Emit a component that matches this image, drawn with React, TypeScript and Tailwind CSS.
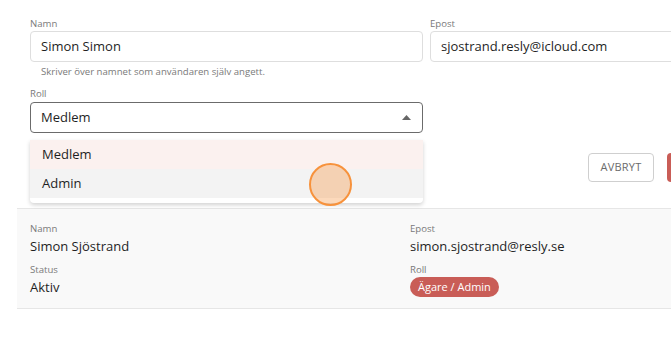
import React from "react";

export default function App() {
  const font = { fontFamily: '"Open Sans", "Noto Sans", sans-serif' };
  return (
    <div className="w-[671px] h-[342px] overflow-hidden bg-white relative" style={font}>
      <div className="pl-[17px]">
        {/* Form */}
        <div className="pl-[13px] pt-[17px] relative">
          <div className="grid grid-cols-[393px_393px] gap-x-[7px]">
            <div>
              <div className="text-[9.6px] leading-[14px] text-[#7a7a7a]">Namn</div>
              <div className="h-[31px] border border-[#dedede] rounded-[4px] flex items-center px-[10px] text-[13px] text-[#1f1f1f]">
                Simon Simon
              </div>
              <div className="mt-[3px] pl-[11px] text-[9.6px] leading-[14px] text-[#7a7a7a]">
                Skriver över namnet som användaren själv angett.
              </div>
            </div>
            <div>
              <div className="text-[9.6px] leading-[14px] text-[#7a7a7a]">Epost</div>
              <div className="h-[31px] border border-[#dedede] rounded-[4px] flex items-center px-[10px] text-[13px] text-[#1f1f1f]">
                sjostrand.resly@icloud.com
              </div>
            </div>
          </div>
          <div className="mt-[8px] w-[393px] relative">
            <div className="text-[9.6px] leading-[14px] text-[#7a7a7a]">Roll</div>
            <div className="mt-[1px] h-[31px] border border-[#6b6b6b] rounded-[4px] flex items-center justify-between pl-[10px] pr-[11px] text-[13px] text-[#1f1f1f]">
              <span>Medlem</span>
              <svg width="9" height="5" viewBox="0 0 9 5">
                <path d="M0 5 L4.5 0 L9 5 Z" fill="#666" />
              </svg>
            </div>
            {/* Dropdown menu */}
            <div className="absolute left-0 top-[53px] w-[393px] bg-white rounded-b-[4px] shadow-[0_2px_4px_rgba(0,0,0,0.18)] pb-[5px] z-10">
              <div className="h-[29px] flex items-center px-[12px] text-[13px] text-[#1f1f1f] bg-[#fbf1ef]">Medlem</div>
              <div className="h-[29px] flex items-center px-[12px] text-[13px] text-[#1f1f1f] bg-[#f3f3f3]">Admin</div>
            </div>
          </div>
          {/* Buttons */}
          <div className="mt-[20px] flex justify-end gap-[13px] mr-[-56px]">
            <div className="w-[66px] h-[29px] border border-[#cfcfcf] rounded-[4px] flex items-center justify-center text-[11px] text-[#6b6b6b] tracking-[0.2px]">
              AVBRYT
            </div>
            <div className="w-[60px] h-[29px] rounded-[4px] bg-[#c95d57]"></div>
          </div>
        </div>

        {/* Member details */}
        <div className="mt-[26px] bg-[#f9f9f9] border-t border-b border-[#e6e6e6] pl-[13px] pt-[13px] pb-[11px] grid grid-cols-[380px_1fr]">
          <div>
            <div className="text-[9.6px] leading-[14px] text-[#7a7a7a]">Namn</div>
            <div className="text-[13px] leading-[20px] text-[#1f1f1f]">Simon Sjöstrand</div>
            <div className="mt-[7px] text-[9.6px] leading-[14px] text-[#7a7a7a]">Status</div>
            <div className="text-[13px] leading-[20px] text-[#1f1f1f]">Aktiv</div>
          </div>
          <div>
            <div className="text-[9.6px] leading-[14px] text-[#7a7a7a]">Epost</div>
            <div className="text-[13px] leading-[20px] text-[#1f1f1f]">simon.sjostrand@resly.se</div>
            <div className="mt-[7px] text-[9.6px] leading-[14px] text-[#7a7a7a]">Roll</div>
            <div className="h-[20px] flex items-center">
              <span className="h-[20px] inline-flex items-center px-[8px] rounded-full bg-[#c95d57] text-white text-[11px]">
                Ägare / Admin
              </span>
            </div>
          </div>
        </div>
      </div>

      {/* Touch indicator */}
      <div className="absolute left-[309px] top-[163px] w-[43px] h-[43px] rounded-full border-2 border-[#f7923c] bg-[rgba(247,146,60,0.35)] z-20"></div>
    </div>
  );
}
